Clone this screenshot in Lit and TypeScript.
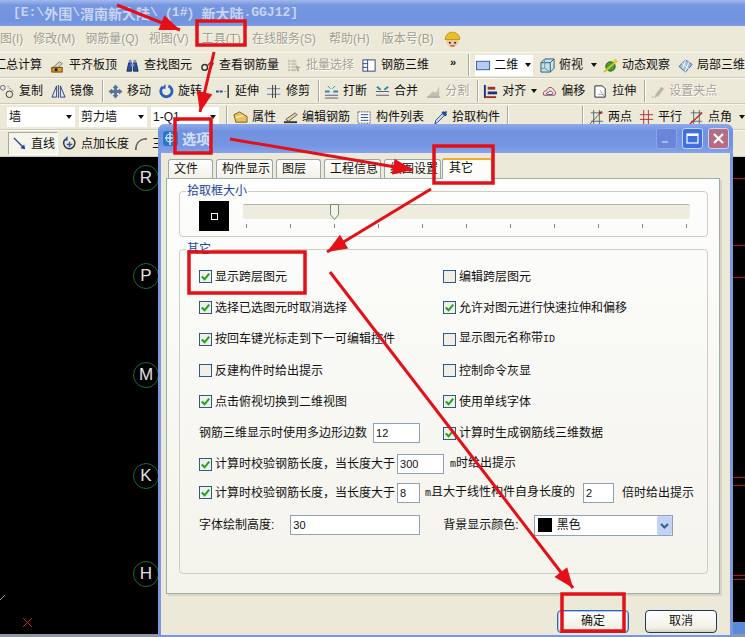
import { LitElement, html, css, svg } from "lit";
import { customElement } from "lit/decorators.js";

const I: Record<string, any> = {
  level: svg`<path d="M1 12l9-8 3 2-8 8z" fill="#d8d4c0" stroke="#777"/><rect x="2" y="10" width="11" height="5" fill="#e0a020" stroke="#704010"/><rect x="5" y="11" width="3" height="3" fill="#222"/>`,
  binoc: svg`<path d="M2 14l2-9h3v9zM9 14V5h3l2 9z" fill="#2a4f98" stroke="#16305f"/><rect x="6" y="6" width="4" height="3" fill="#7b92c4"/><rect x="4" y="2" width="3" height="3" fill="#7b92c4"/><rect x="9" y="2" width="3" height="3" fill="#7b92c4"/>`,
  rebar: svg`<circle cx="5" cy="10" r="3" fill="none" stroke="#333" stroke-width="1.5"/><path d="M8 8l5-5" stroke="#a33" stroke-width="1.5"/><path d="M10 13l4-8" stroke="#335" stroke-width="2"/>`,
  batch: svg`<rect x="1" y="2" width="9" height="12" fill="#c8c6b8"/><path d="M1 5h9M1 8h9M1 11h9M4 2v12" stroke="#ecead8"/><path d="M9 8l6 2-3 1 1 3-2 0-1-3z" fill="#aaa89a"/>`,
  r3d: svg`<rect x="1" y="2" width="13" height="12" fill="#fff" stroke="#27408a"/><path d="M6 2v12M1 6h5M1 10h5" stroke="#27408a"/>`,
  rect2: svg`<rect x=".5" y="3.5" width="14" height="9" fill="#b8ccf0" stroke="#2f5ab0"/>`,
  cube: svg`<path d="M1 5h10v10H1zM1 5l4-4h10l-4 4M11 15l4-4V1" fill="#c5e0ea" stroke="#2a5b78"/><path d="M5 1v10H1M5 11l6 4" fill="none" stroke="#6a93a8"/>`,
  orbit: svg`<ellipse cx="8" cy="9" rx="5" ry="5" fill="#40a030" stroke="#206018"/><path d="M1 15L15 3" stroke="#d8c020" stroke-width="2"/><circle cx="13" cy="3" r="2" fill="#e8d030"/>`,
  part: svg`<path d="M1 9l7-7 7 5-7 8z" fill="#9cc0e0" stroke="#46709a"/><path d="M4.5 5.5l7 6M8 2l-3 9M11.5 4.5l-4 10" stroke="#fff"/>`,
  copy: svg`<circle cx="3" cy="4" r="2.5" fill="none" stroke="#667"/><circle cx="10" cy="11" r="3.5" fill="none" stroke="#333"/><path d="M8 2l6 6" stroke="#667" stroke-dasharray="2 1"/>`,
  mirror: svg`<path d="M1 14L6 2v12zM15 14L10 2v12z" fill="#dfe8f5" stroke="#27408a"/><path d="M8 1v14" stroke="#555"/>`,
  move: svg`<path d="M8 1l2.500 3H9v3h3V5.500L15 8l-3 2.500V9H9v3h1.500L8 15l-2.500-3H7V9H4v1.500L1 8l3-2.500V7h3V4H5.500z" fill="#5a7cae" stroke="#2c4a78" stroke-width=".6"/>`,
  rotate: svg`<path d="M4 3a6 6 0 1 0 6-1" fill="none" stroke="#2e5fc0" stroke-width="3"/><path d="M7 0v5H2z" fill="#2e5fc0"/>`,
  extend: svg`<path d="M0 8h7" stroke="#2848a8" stroke-width="2" stroke-dasharray="3 1"/><path d="M9 8h2" stroke="#888"/><path d="M13 1v14" stroke="#333" stroke-width="1.500"/>`,
  trim: svg`<path d="M0 5h14M0 11h14" stroke="#5c7cb0"/><path d="M6 1v14M9 1v14" stroke="#333"/>`,
  brk: svg`<path d="M1 12h14M1 15h14" stroke="#557"/><path d="M1 8h5M10 8h5" stroke="#2a8aa8" stroke-width="2"/><path d="M4 2l3 3M12 2L9 5" stroke="#2a8aa8"/>`,
  merge: svg`<path d="M1 8h14M1 12h14" stroke="#557"/><path d="M2 3l4 3M14 3l-4 3" stroke="#2a8aa8" stroke-width="2"/>`,
  split: svg`<path d="M1 14l6-6 4 1 3-7v12z" fill="#c2c0b2"/><path d="M1 14h14" stroke="#999"/>`,
  align: svg`<path d="M2 1v14" stroke="#1a2f8a" stroke-width="2"/><rect x="5" y="3" width="8" height="3" fill="#a03020"/><rect x="5" y="8" width="10" height="3" fill="#203080"/><path d="M2 14h12" stroke="#a03020" stroke-width="2"/>`,
  offset: svg`<path d="M2 12c-2-4 2-5 3-5 1-4 6-5 8 0 2 1 2 5 0 5z" fill="#f8e0d8" stroke="#a04040"/><path d="M5 11c-1-2 1-2 2-2 0-2 3-2 4 0 1 1 0 2 0 2z" fill="#fff" stroke="#447"/>`,
  stretch: svg`<path d="M2 2h8l3 3v9H2z" fill="#fff" stroke="#223"/><path d="M8 7l4 7M6 11h5" stroke="#557" stroke-dasharray="1 1"/>`,
  grip: svg`<path d="M2 14h4" stroke="#aaa" stroke-dasharray="2 1"/><path d="M6 11l6-8 3 2-6 8-4 1z" fill="#b8b6a8"/>`,
  prop: svg`<path d="M1 5l6-3 8 5v6H3z" fill="#e8c060" stroke="#806020"/><path d="M3 8l8-2" stroke="#fff"/>`,
  edit: svg`<path d="M1 13h14" stroke="#333" stroke-width="2"/><path d="M3 10L13 3l2 2L6 12z" fill="#e8d8a0" stroke="#555"/>`,
  list: svg`<rect x="1" y="2" width="13" height="12" fill="#fff" stroke="#557" stroke-dasharray="2 1"/><path d="M4 5h8M4 8h8M4 11h8" stroke="#27408a"/>`,
  pick: svg`<path d="M2 15l1-4 7-7 2 2-7 7z" fill="#cfe4f5" stroke="#27408a"/><path d="M9 3l4 4 2-2-1-1 1-2-1-1-2 1-1-1z" fill="#1e4a9a"/>`,
  two: svg`<path d="M2 3h13M2 12h13M5 0v15M11 0v15" stroke="#567"/><path d="M1 15L14 1" stroke="#556b2f"/><circle cx="12" cy="3" r="1.500" fill="#a22"/>`,
  par: svg`<path d="M1 5h14M1 10h14M5 0v15M10 0v15" stroke="#a33"/>`,
  ang: svg`<path d="M2 3h12M2 12h12M5 0v15M11 0v15" stroke="#567"/><path d="M1 15L14 3" stroke="#c22" stroke-width="1.500"/>`,
  line: svg`<path d="M2 2l11 11" stroke="#27408a" stroke-width="1.500"/><path d="M14 14l-5-1 4-4z" fill="#27408a"/>`,
  addlen: svg`<path d="M3 4a6 6 0 1 0 7-2" fill="none" stroke="#333" stroke-width="1.500"/><path d="M6 0v5H1z" fill="#2a5ab0"/><path d="M8 6v6M5 9h6" stroke="#2a5ab0" stroke-width="1.500"/>`,
  arc: svg`<path d="M3 14C3 7 8 3 14 3" fill="none" stroke="#666" stroke-width="1.500"/><circle cx="3" cy="14" r="1" fill="#a33"/><circle cx="14" cy="3" r="1" fill="#a33"/>`,
  head: svg`<circle cx="8" cy="9" r="6" fill="#f0c8a0"/><path d="M1 8a7 7 0 0 1 14 0z" fill="#e8c020" stroke="#a88010" stroke-width=".6"/><circle cx="5.500" cy="11" r="1" fill="#333"/><circle cx="10.500" cy="11" r="1" fill="#333"/><path d="M6 14h4" stroke="#a33"/>`,
};

const ic = (n: string) => html`<svg class="ic" viewBox="0 0 16 16">${I[n]}</svg>`;
const it = (n: string, t: string, off = false, cls = "") =>
  html`<div class="it ${off ? "off" : ""} ${cls}">${ic(n)}<span>${t}</span></div>`;
const arrowDown = html`<i class="dn"></i>`;
const arrowTight = html`<i class="dn tight"></i>`;
const sep = html`<i class="sep"></i>`;

const tick = svg`<path d="M3 7l3 3 5-6" fill="none" stroke="#21a121" stroke-width="2.200"/>`;
const cb = (on: boolean, t: unknown) => html`<label class="cb">
  <svg class="box" viewBox="0 0 14 14"><rect x=".5" y=".5" width="13" height="13" fill="#f1efe6" stroke="#1c5180"/>${on ? tick : ""}</svg>
  <span>${t}</span></label>`;
const inp = (v: string, cls: string) => html`<span class="in ${cls}">${v}</span>`;

const arrows: [number, number, number, number][] = [
  [117, 5, 180, 30],
  [214, 52, 200, 112],
  [230, 139, 413, 170],
  [431, 189, 327, 252],
  [330, 272, 573, 588],
];
const boxes: [number, number, number, number][] = [
  [197, 21, 48, 24],
  [175, 119, 36, 34],
  [434, 146, 59, 37],
  [189, 252, 116, 41],
  [562, 594, 62, 37],
];
const head = (a: number[]) => {
  const [x1, y1, x2, y2] = a;
  const l = Math.hypot(x2 - x1, y2 - y1);
  const ux = (x2 - x1) / l, uy = (y2 - y1) / l;
  const bx = x2 - ux * 20, by = y2 - uy * 20;
  const p = (s: number) => `${bx - uy * s},${by + ux * s}`;
  return `${x2},${y2} ${p(8)} ${p(-8)}`;
};
const axes: [string, number][] = [["R", 178], ["P", 276], ["M", 375], ["K", 476], ["H", 574]];
const tabs = ["文件", "构件显示", "图层", "工程信息", "绘图设置"];

@customElement("app-root")
export class AppRoot extends LitElement {
  static styles = css`
    :host { display: block; width: 745px; height: 637px; position: relative; overflow: hidden; background: #ece9d8;
      font: 12px/16px "Liberation Sans", "Noto Sans CJK SC", sans-serif; color: #111; }
    .app { display: flex; flex-direction: column; height: 637px; }
    .title { height: 26px; flex: none; display: flex; align-items: center; padding-left: 13px; box-sizing: border-box;
      background: linear-gradient(#a3b9ec, #7596e0 20%, #7192de 80%, #7c9ce4); color: #c9d4f2; font-weight: 700; white-space: pre; }
    .title b { font: 700 14px/20px "Noto Sans CJK SC", sans-serif; }
    .title u { font: 700 13px/20px "Liberation Mono", monospace; text-decoration: none; }
    .menu { height: 26px; flex: none; display: flex; align-items: center; gap: 10px; color: #a09e92;
      text-shadow: 1px 1px 0 #fbfaf3; }
    .menu .ic { width: 17px; height: 17px; }
    .n1 { margin-left: 1px; }
    .n2 { margin-left: 2px; }
    .n3 { margin-left: 3px; }
    .nm2 { margin-left: -2px; }
    .n6 { margin-left: 6px; }
    .bar { height: 26px; flex: none; display: flex; align-items: center; gap: 8px; box-sizing: border-box; white-space: nowrap;
      border-top: 1px solid #f8f7f0; border-bottom: 1px solid #cfccba; }
    .b3 { gap: 7px; padding-left: 7px; }
    .b4 { height: 27px; padding-left: 8px; gap: 4px; }
    .it { display: flex; align-items: center; gap: 4px; }
    .it.off { color: #a6a498; text-shadow: 1px 1px 0 #fff; }
    .ic { width: 15px; height: 15px; flex: none; }
    .sep { width: 1px; height: 22px; background: #aca899; box-shadow: 1px 0 0 #fff; flex: none; margin-right: -1px; }
    .dn { width: 0; height: 0; border: 3px solid transparent; border-top: 4px solid #111; border-bottom: 0; flex: none; }
    .tight { margin: 0 -3px; }
    .first { margin-left: -6px; }
    .chev { font: 700 11px/12px "Liberation Sans", sans-serif; margin: -6px 4px 0 13px; }
    .two { background: #fff; height: 21px; width: 57px; display: flex; align-items: center; gap: 3px; margin: 0 -1px; padding-left: 1px; }
    .two .dn { margin-left: 4px; }
    .combos { display: flex; gap: 4px; }
    .combo { width: 68px; height: 20px; background: #fff; box-sizing: border-box; padding-left: 2px; display: flex; align-items: center; justify-content: space-between; }
    .combo .dn { margin-right: 3px; }
    .pressed { border: 1px solid #fff; border-left-color: #aca899; border-top-color: #aca899; background: #f6f5ec; height: 23px; width: 50px; box-sizing: border-box; padding-left: 3px; }
    .push { margin-left: 68px; }
    .canvas { flex: 1; background: #000; position: relative; overflow: hidden; }
    .bottom { height: 3px; flex: none; background: #8a98a8; }
    .axis { position: absolute; left: 133px; width: 26px; height: 26px; box-sizing: border-box; border: 1px solid #1d6b35; border-radius: 50%;
      color: #e0e0e0; font: 17px/24px "Liberation Sans", sans-serif; text-align: center; }
    .rl { position: absolute; left: 733px; right: 0; height: 1px; background: #b01818; }
    .corner { position: absolute; left: 733px; right: 0; top: 465px; bottom: 0; background: #5c8ad8; }
    .mark { position: absolute; left: 0; top: 0; }

    .dlg { position: absolute; left: 158px; top: 124px; width: 575px; height: 513px; box-sizing: border-box; display: flex; flex-direction: column;
      background: #ece9d8; border-radius: 7px 7px 0 0; border: solid #7b97e0; border-width: 0 3px 2px; }
    .dtitle { height: 29px; flex: none; margin: 0 -3px; border-radius: 7px 7px 0 0; display: flex; align-items: center; padding: 0 4px;
      background: linear-gradient(#8fa9ea, #7092e0 25%, #7495e2 75%, #86a2ea); color: #d6e0f8; gap: 3px; }
    .dtitle strong { font-size: 14px; flex: 1; font-weight: 700; }
    .logo { width: 17px; height: 17px; }
    .wb { width: 21px; height: 21px; box-sizing: border-box; border-radius: 3px; border: 1px solid #c8d4f4; margin-left: 2px; display: flex; align-items: center; justify-content: center; }
    .wb svg { width: 15px; height: 15px; }
    .wmin { background: #6a86d8; border-color: #8ea6e6; }
    .wmax { background: #3f6fe0; }
    .wx { background: #b86c84; }
    .tabs { height: 25px; flex: none; display: flex; align-items: flex-end; padding-left: 7px; gap: 3px; }
    .tab { height: 16px; padding: 1px 2px 1px 5px; box-sizing: content-box; border: 1px solid #9aa8a8; border-bottom: 0; border-radius: 3px 3px 0 0; background: linear-gradient(#fff, #f2f0e6); display: flex; align-items: center; font-size: 12px; white-space: nowrap; }
    .t0 { width: 36px; }
    .t1 { width: 48px; }
    .sel { height: 19px; width: 39px; padding: 0 3px 0 6px; margin-left: -2px; background: #fcfcfa; border-top: 2px solid #f0a830; margin-bottom: -1px; position: relative; align-items: flex-start; border-color: #f0a830 #9aa8a8 #fff; }
    .panel { width: 554px; height: 416px; flex: none; margin-left: 5px; box-sizing: border-box; border: 1px solid #9ab0a8; background: linear-gradient(#fdfdfc, #f4f3ec); padding: 12px 12px 0; display: flex; flex-direction: column; gap: 12px; box-shadow: 2px 2px 0 #d8d5c4; }
    .grp { border: 1px solid #cfcdc4; border-radius: 4px; box-sizing: border-box; width: 529px; position: relative; }
    .cap { position: absolute; left: 6px; top: -9px; color: #1a47a8; background: #fbfbf8; padding: 0 1px; }
    .g1 { height: 46px; display: flex; padding: 9px 0 0 19px; gap: 14px; }
    .pk { width: 30px; height: 30px; background: #000; display: flex; align-items: center; justify-content: center; }
    .pk i { width: 5px; height: 5px; border: 1px solid #fff; }
    .sl { width: 447px; display: flex; flex-direction: column; position: relative; margin-top: 3px; }
    .trk { height: 15px; background: #eeecdf; border-top: 1px solid #b5b3a6; box-sizing: border-box; border-radius: 2px; }
    .tks { display: flex; justify-content: space-between; padding: 5px 3px 0; }
    .tks i { width: 1px; height: 4px; background: #888; }
    .th { position: absolute; left: 87px; top: 0; width: 9px; height: 16px; }
    .g2 { height: 325px; padding: 11px 0 0 19px; }
    .rows { display: grid; grid-template-columns: 244px 244px; grid-auto-rows: 31.3px; align-items: center; }
    .cb { display: inline-flex; align-items: center; gap: 3px; white-space: nowrap; flex: none; }
    .box { width: 13px; height: 13px; flex: none; }
    .fl { display: flex; align-items: center; white-space: nowrap; }
    .h1 { height: 31px; gap: 2px; }
    .h2 { height: 24px; gap: 2px; margin-top: 1px; }
    .h3 { height: 33px; margin-top: 4px; }
    .in { display: inline-block; flex: none; background: #fff; border: 1px solid #8ea2b4; box-sizing: border-box; height: 20px; font: 11px/18px "Liberation Sans", sans-serif; padding-left: 2px; }
    .i12 { width: 47px; margin-left: 6px; }
    .i300 { width: 47px; }
    .i8 { width: 23px; }
    .i2 { width: 31px; margin: 0 6px; }
    .i30 { width: 130px; margin-left: 16px; }
    .mt { margin-left: 4px; }
    .m8 { margin-left: 3px; }
    .mono { font: 10px/16px "Liberation Mono", monospace; }
    .blab { margin-left: 23px; flex: none; }
    .sel2 { margin-left: 15px; width: 139px; flex: none; height: 21px; border: 1px solid #8ea2b4; background: #fff; box-sizing: border-box; display: flex; align-items: center; gap: 5px; padding-left: 3px; }
    .sel2 i { width: 14px; height: 14px; background: #000; }
    .sel2 span { flex: 1; }
    .sel2 svg { width: 15px; height: 19px; }
    .btns { flex: 1; display: flex; justify-content: flex-end; gap: 16px; padding: 16px 13px 0 0; }
    .btn { width: 72px; height: 23px; border: 1px solid #1f3b60; border-radius: 4px; box-sizing: border-box; background: linear-gradient(#fff, #f2f0e4 80%, #d8d4c4); text-align: center; line-height: 21px; }
    .ok { border-color: #2f66b8; box-shadow: inset 0 0 0 1px #a8c4ec; }
    .over { position: absolute; left: 0; top: 0; pointer-events: none; }
  `;

  render() {
    return html`<div class="app">
      <div class="title"><u>[E:\\</u><b>外围</b><u>\\</u><b>渭南新大陆</b><u>\\</u><b>（</b><u>1#</u><b>）新大陆</b><u>.GGJ12]</u></div>
      <div class="menu">
        <span>图(I)</span><span>修改(M)</span><span>钢筋量(Q)</span><span>视图(V)</span><span class="n3">工具(T)</span><span class="n1">在线服务(S)</span><span class="n3">帮助(H)</span><span class="n2">版本号(B)</span>${ic("head")}
      </div>
      <div class="bar">
        <span class="first">汇总计算</span>
        ${it("level", "平齐板顶")}${it("binoc", "查找图元")}${it("rebar", "查看钢筋量")}${it("batch", "批量选择", true)}${it("r3d", "钢筋三维")}
        <span class="chev">»</span>${sep}
        <div class="two">${ic("rect2")}<span>二维</span>${arrowDown}</div>
        ${it("cube", "俯视")}${arrowDown}${it("orbit", "动态观察", false, "nm2")}${it("part", "局部三维")}
      </div>
      <div class="bar">
        ${it("copy", "复制")}${it("mirror", "镜像")}${sep}${it("move", "移动", false, "nm2")}${it("rotate", "旋转")}${it("extend", "延伸", false, "n6")}${it("trim", "修剪")}${sep}
        ${it("brk", "打断", false, "nm2")}${it("merge", "合并")}${it("split", "分割", true)}${sep}
        ${it("align", "对齐", false, "nm2")}${arrowTight}${it("offset", "偏移")}${it("stretch", "拉伸")}${sep}${it("grip", "设置夹点", true, "nm2")}
      </div>
      <div class="bar b3">
        <div class="combos">
          <div class="combo">墙${arrowDown}</div><div class="combo">剪力墙${arrowDown}</div><div class="combo">1-Q1${arrowDown}</div>
        </div>
        ${sep}${it("prop", "属性")}${it("edit", "编辑钢筋")}${it("list", "构件列表")}${it("pick", "拾取构件", false, "n2")}${sep}
        <i class="sep push"></i>${it("two", "两点")}${it("par", "平行")}${it("ang", "点角")}${arrowDown}
      </div>
      <div class="bar b4">
        <div class="it pressed">${ic("line")}<span>直线</span></div>${it("addlen", "点加长度")}
        ${it("arc", "三点")}
      </div>
      <div class="canvas">
        ${axes.map(([n, y]) => html`<div class="axis" style="top:${y - 170}px">${n}</div>`)}
        ${[21, 88, 120, 320, 328, 418, 422].map((y) => html`<i class="rl" style="top:${y}px"></i>`)}
        <i class="corner"></i>
        <svg class="mark" width="60" height="477">
          <path d="M0 443l5-5" stroke="#7fae7f"/>
          <path d="M23 461l9 9M32 461l-9 9" stroke="#d02020"/>
        </svg>
      </div>
      <div class="bottom"></div>
    </div>

    <div class="dlg">
      <div class="dtitle">
        <svg class="logo" viewBox="0 0 17 17"><rect x="1" y="1" width="15" height="15" rx="3" fill="#2a78c8"/><path d="M8 2v13M3 8h11" stroke="#cfe4fa" stroke-width="1.500"/><circle cx="8" cy="8" r="4" fill="none" stroke="#cfe4fa"/></svg>
        <strong>选项</strong>
        <div class="wb wmin"><svg viewBox="0 0 15 15"><rect x="3" y="10" width="6" height="2" fill="#a8b8e8"/></svg></div>
        <div class="wb wmax"><svg viewBox="0 0 15 15"><rect x="2" y="3" width="11" height="9" fill="none" stroke="#fff" stroke-width="1.200"/><path d="M2 4h11" stroke="#fff" stroke-width="2"/></svg></div>
        <div class="wb wx"><svg viewBox="0 0 15 15"><path d="M3 3l9 9M12 3l-9 9" stroke="#fff" stroke-width="2.200"/></svg></div>
      </div>
      <div class="tabs">
        ${tabs.map((t) => html`<div class="tab ${t.length === 2 ? "t0" : "t1"}">${t}</div>`)}
        <div class="tab sel">其它</div>
      </div>
      <div class="panel">
        <div class="grp g1">
          <span class="cap">拾取框大小</span>
          <div class="pk"><i></i></div>
          <div class="sl">
            <div class="trk"></div>
            <div class="tks">${Array.from({ length: 11 }, () => html`<i></i>`)}</div>
            <svg class="th" viewBox="0 0 9 16"><path d="M.5.500h8v10l-4 5-4-5z" fill="#f4f3ec" stroke="#6f8f70"/></svg>
          </div>
        </div>
        <div class="grp g2">
          <span class="cap">其它</span>
          <div class="rows">
            ${cb(true, "显示跨层图元")}${cb(false, "编辑跨层图元")}
            ${cb(true, "选择已选图元时取消选择")}${cb(true, "允许对图元进行快速拉伸和偏移")}
            ${cb(true, "按回车键光标走到下一可编辑控件")}${cb(false, html`显示图元名称带<span class="mono">ID</span>`)}
            ${cb(false, "反建构件时给出提示")}${cb(false, "控制命令灰显")}
            ${cb(true, "点击俯视切换到二维视图")}${cb(true, "使用单线字体")}
            <div class="fl">钢筋三维显示时使用多边形边数${inp("12", "i12")}</div>${cb(true, "计算时生成钢筋线三维数据")}
          </div>
          <div class="fl h1">${cb(true, "计算时校验钢筋长度，当长度大于")}${inp("300", "i300")}<span class="mt"><span class="mono">m</span>时给出提示</span></div>
          <div class="fl h2">${cb(true, "计算时校验钢筋长度，当长度大于")}${inp("8", "i8")}<span class="m8"><span class="mono">m</span>且大于线性构件自身长度的</span>${inp("2", "i2")}倍时给出提示</div>
          <div class="fl h3">字体绘制高度:${inp("30", "i30")}<span class="blab">背景显示颜色:</span>
            <div class="sel2"><i></i><span>黑色</span>
              <svg viewBox="0 0 15 19"><rect width="15" height="19" rx="2" fill="#c3d3f5"/><path d="M4 8l3.500 3.500L11 8" fill="none" stroke="#3a5a98" stroke-width="2"/></svg>
            </div>
          </div>
        </div>
      </div>
      <div class="btns"><div class="btn ok">确定</div><div class="btn">取消</div></div>
    </div>

    <svg class="over" width="745" height="637">
      ${boxes.map(([x, y, w, h]) => svg`<rect x=${x} y=${y} width=${w} height=${h} fill="none" stroke="#e41018" stroke-width="3.500"/>`)}
      ${arrows.map((a) => svg`<line x1=${a[0]} y1=${a[1]} x2=${a[2]} y2=${a[3]} stroke="#e41018" stroke-width="3"/><polygon points=${head(a)} fill="#e41018"/>`)}
    </svg>`;
  }
}
